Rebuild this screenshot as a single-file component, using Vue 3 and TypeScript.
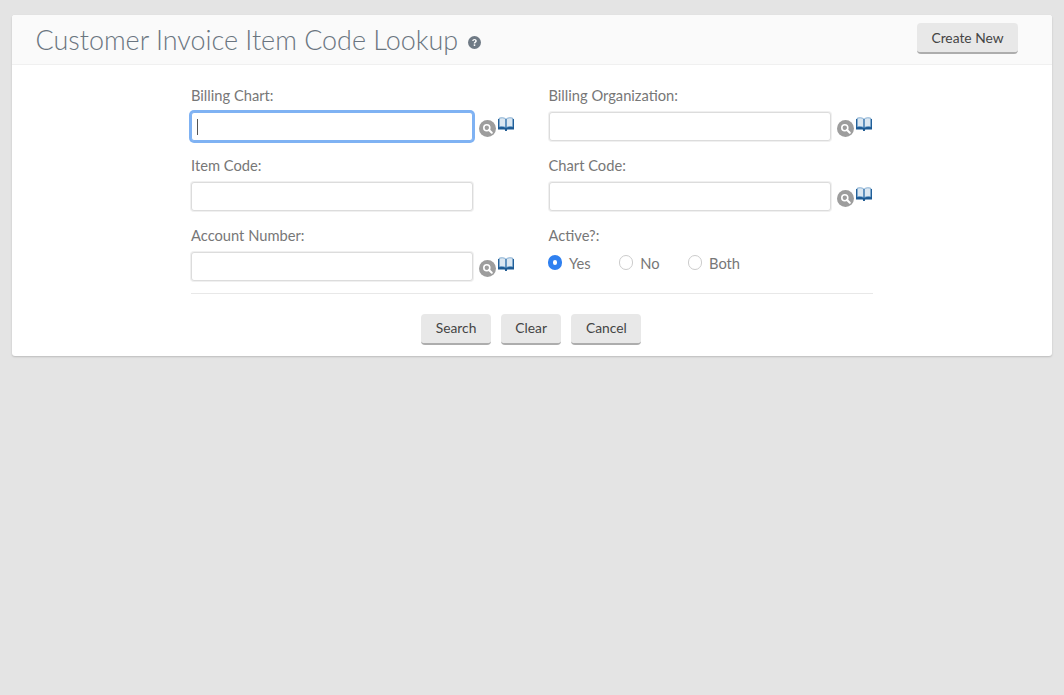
<script setup lang="ts">
import { ref } from "vue";

interface Field {
  label: string;
  lookup: boolean;
  focused?: boolean;
}

const fields: Field[] = [
  { label: "Billing Chart:", lookup: true, focused: true },
  { label: "Billing Organization:", lookup: true },
  { label: "Item Code:", lookup: false },
  { label: "Chart Code:", lookup: true },
  { label: "Account Number:", lookup: true },
];

const activeOptions = ["Yes", "No", "Both"];
const active = ref("Yes");
</script>

<template>
  <div class="page">
    <main class="card">
      <header class="card-head">
        <h1 class="title">Customer Invoice Item Code Lookup</h1>
        <svg class="help" viewBox="0 0 12 12" width="13" height="13">
          <circle cx="6" cy="6" r="6" fill="#6f7a85" />
          <path d="M3.900 4.700c0-1.300 1-2 2.100-2s2.100.7 2.100 1.800c0 1.400-1.500 1.300-1.500 2.500H5.300c0-1.800 1.400-1.700 1.400-2.500 0-.4-.3-.7-.7-.7-.5 0-.8.3-.9.8z" fill="#fff" />
          <rect x="5.300" y="7.700" width="1.400" height="1.500" fill="#fff" />
        </svg>
        <button class="btn create">Create New</button>
      </header>

      <form class="form" @submit.prevent>
        <div class="grid">
          <div v-for="f in fields" :key="f.label" class="field">
            <label class="label">{{ f.label }}</label>
            <div class="control">
              <div class="input" :class="{ focused: f.focused }">
                <span v-if="f.focused" class="caret"></span>
              </div>
              <template v-if="f.lookup">
                <svg class="search-icon" viewBox="0 0 17 17" width="17" height="17">
                  <circle cx="8.500" cy="8.500" r="8.500" fill="#9d9d9d" />
                  <circle cx="7.800" cy="7.800" r="3" fill="none" stroke="#fff" stroke-width="1.600" />
                  <path d="M10 10l2.800 2.800" stroke="#fff" stroke-width="2" stroke-linecap="round" />
                </svg>
                <svg class="book-icon" viewBox="0 0 16 15" width="16" height="15">
                  <path d="M0 2h16v10.500H9.200L8.800 14H7.200l-.4-1.500H0z" fill="#1d5a93" />
                  <path d="M1.200 1.200C3.500.5 6 .6 7.600 1.800v8.700C6 9.500 3.500 9.400 1.200 10z" fill="#dbe7f1" stroke="#3f80b8" stroke-width=".6" />
                  <path d="M14.800 1.200C12.500.5 10 .6 8.400 1.800v8.700c1.600-1 4.100-1.100 6.400-.5z" fill="#dbe7f1" stroke="#3f80b8" stroke-width=".6" />
                </svg>
              </template>
            </div>
          </div>

          <div class="field">
            <label class="label">Active?:</label>
            <div class="radios">
              <label v-for="opt in activeOptions" :key="opt" class="radio" @click="active = opt">
                <span class="dot" :class="{ on: active === opt }"></span>
                {{ opt }}
              </label>
            </div>
          </div>
        </div>

        <div class="actions">
          <button class="btn">Search</button>
          <button class="btn">Clear</button>
          <button class="btn">Cancel</button>
        </div>
      </form>
    </main>
  </div>
</template>

<style>
html,
body {
  margin: 0;
  background: #e4e4e4;
}
</style>

<style scoped>
.page {
  min-height: 695px;
  padding: 15px 12px 0;
  box-sizing: border-box;
  background: #e4e4e4;
  font-family: Lato, "Liberation Sans", sans-serif;
}

.card {
  background: #fff;
  border-radius: 3px;
  box-shadow: 0 1px 2px rgba(0, 0, 0, 0.18);
  height: 341px;
}

.card-head {
  display: flex;
  align-items: center;
  height: 50px;
  box-sizing: border-box;
  padding: 0 34px 0 23.5px;
  background: #fafafa;
  border-bottom: 1px solid #f0f0f0;
  border-radius: 3px 3px 0 0;
}

.title {
  margin: -1px 0 0;
  font-size: 26.95px;
  font-weight: 300;
  color: #6a7580;
}

.help {
  margin: 5px 0 0 9.500px;
}

.btn {
  height: 31px;
  padding: 0 14.500px 2px;
  border: none;
  border-bottom: 2px solid #adadad;
  border-radius: 4px;
  background: #e8e8e8;
  color: #444;
  font-family: inherit;
  font-size: 13.8px;
  white-space: nowrap;
}

.create {
  width: 101px;
  padding: 0;
  margin: -3px 0 0 auto;
}

.form {
  width: 682px;
  margin: 0 auto;
  padding-top: 22px;
}

.grid {
  display: grid;
  grid-template-columns: 357.5px 1fr;
  row-gap: 13px;
  padding-bottom: 9px;
  border-bottom: 1px solid #e8e8e8;
}

.field {
  height: 57px;
}

.label {
  display: block;
  height: 25px;
  line-height: 16px;
  font-size: 14.7px;
  color: #777;
}

.control {
  display: flex;
  align-items: flex-start;
}

.input {
  width: 282px;
  height: 29px;
  box-sizing: border-box;
  display: flex;
  align-items: center;
  padding-left: 5px;
  background: #fff;
  border: 1px solid #dcdcdc;
  border-radius: 3px;
  box-shadow: 0 0 0 1px #f0f0f0;
}

.input.focused {
  border-color: #7fb2f3;
  box-shadow: 0 0 0 2px #7fb2f3;
}

.caret {
  width: 1px;
  height: 16px;
  background: #555;
}

.search-icon {
  margin: 8px 0 0 6px;
}

.book-icon {
  margin: 5px 0 0 2px;
}

.radios {
  display: flex;
  gap: 28px;
  height: 29px;
  margin: -4px 0 0 -1px;
  align-items: center;
}

.radio {
  display: flex;
  align-items: center;
  gap: 7px;
  font-size: 14.7px;
  color: #777;
}

.dot {
  width: 14.500px;
  height: 14.500px;
  box-sizing: border-box;
  border: 1px solid #ccc;
  border-radius: 50%;
  background: #fff;
}

.dot.on {
  border: 5px solid #2f80f0;
}

.actions {
  display: flex;
  justify-content: center;
  gap: 10px;
  padding: 20px 1.500px 0 0;
}
</style>
